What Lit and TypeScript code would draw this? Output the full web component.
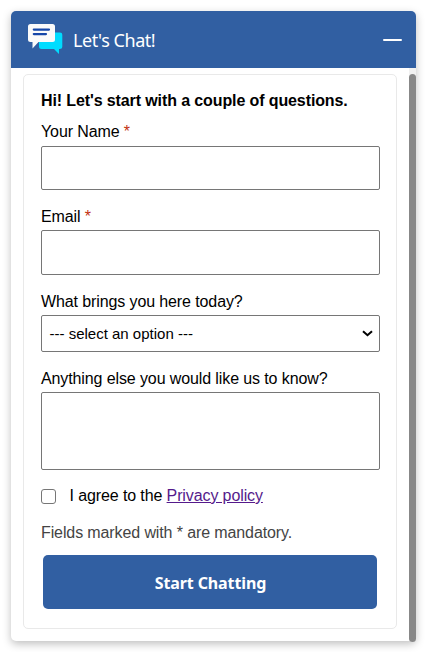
import { LitElement, html, css } from "lit";
import { customElement } from "lit/decorators.js";

@customElement("app-root")
export class AppRoot extends LitElement {
  static styles = css`
    :host {
      display: block;
      height: 652px;
      box-sizing: border-box;
      padding: 11px 10px 0 11px;
      background: #fff;
      overflow: hidden;
      font: 16px/18px "Liberation Sans", Arial, sans-serif;
      letter-spacing: -0.11px;
      color: #000;
    }
    * { box-sizing: border-box; }
    .widget {
      display: flex;
      flex-direction: column;
      width: 405px;
      height: 630px;
      border-radius: 5px;
      background: #fff;
      box-shadow: 0 3px 9px rgba(0, 0, 0, 0.25);
    }
    .header {
      display: flex;
      align-items: center;
      height: 57px;
      flex: none;
      padding: 0 14px 0 17px;
      border-radius: 5px 5px 0 0;
      background: #315fa2;
      color: #fff;
    }
    .logo { display: block; }
    .title {
      flex: 1;
      margin-left: 10px;
      padding-top: 1px;
      font: 18px/24px "Noto Sans", "Open Sans", sans-serif;
      letter-spacing: -0.45px;
      white-space: nowrap;
    }
    .minimize { width: 19px; height: 2px; margin-top: 1px; background: #fff; border-radius: 1px; }
    .body { display: flex; height: 574px; flex: none; }
    .card {
      display: flex;
      flex-direction: column;
      width: 374px;
      height: 555px;
      margin: 6px 12px 0;
      padding: 17px 16px 0 17px;
      border: 1px solid #e9e9e9;
      border-radius: 5px;
    }
    .track { width: 7px; padding-top: 6px; background: #f1f1f1; border-radius: 0 0 4px 4px; }
    .thumb { height: 568px; border-radius: 4px; background: #888; }
    .heading { margin: 0 0 13px; font-size: 16px; line-height: 18px; font-weight: 700; white-space: nowrap; }
    .label { display: block; white-space: nowrap; }
    .req { color: #c23010; }
    .field {
      display: block;
      width: 339px;
      margin: 0;
      border: 1px solid #767676;
      border-radius: 2px;
      background: #fff;
      outline: none;
      resize: none;
    }
    .name { height: 44px; margin: 5px 0 18px; }
    .email { height: 45px; margin: 4px 0 18px; }
    .select {
      display: flex;
      align-items: center;
      justify-content: space-between;
      height: 37px;
      margin: 4px 0 18px;
      padding: 0 6px 0 7.5px;
      font-size: 15px;
      line-height: 17px;
      letter-spacing: 0;
    }
    .notes { height: 78px; margin: 4px 0 17px; }
    .agree { display: flex; align-items: center; height: 18px; white-space: nowrap; }
    .check {
      appearance: none;
      width: 15px;
      height: 15px;
      margin: 0 13.5px 0 0;
      border: 1px solid #767676;
      border-radius: 3px;
      background: #fff;
    }
    .link { color: #551a8b; text-decoration: underline; }
    .hint { margin: 19px 0 13px; color: #444; }
    .button {
      width: 334px;
      height: 54px;
      margin: 0 0 0 2px;
      padding: 2px 0 0 1px;
      border: 0;
      border-radius: 5px;
      background: #315fa2;
      color: #fff;
      font: 700 16px/22px "Noto Sans", "Open Sans", sans-serif;
      letter-spacing: -0.12px;
    }
  `;

  render() {
    return html`
      <section class="widget">
        <header class="header">
          <svg class="logo" width="35" height="32" viewBox="0 0.5 35 32">
            <path d="M14 9H32Q34.3 9 34.3 11.3V23Q34.3 25.5 31.5 25.5H31V30.5L26 25.5H13.5Q11 25.5 11 23V12Z" fill="#00dcff" />
            <path d="M2.5 0.5H24.5Q27 0.5 27 3V16Q27 18.5 24.5 18.5H10.5L4.5 25V18.5H2.5Q0 18.5 0 16V3Q0 0.5 2.5 0.5Z" fill="#fafafa" />
            <path d="M5.8 6.1H21M5.8 10.6H18" stroke="#1546a8" stroke-width="2.2" stroke-linecap="round" />
          </svg>
          <div class="title">Let's Chat!</div>
          <div class="minimize"></div>
        </header>
        <div class="body">
          <form class="card">
            <h1 class="heading">Hi! Let's start with a couple of questions.</h1>
            <label class="label" for="name">Your Name <span class="req">*</span></label>
            <input class="field name" id="name" />
            <label class="label" for="email">Email <span class="req">*</span></label>
            <input class="field email" id="email" />
            <span class="label">What brings you here today?</span>
            <div class="field select" role="combobox">
              <span>--- select an option ---</span>
              <svg width="11" height="7" viewBox="0 0 11 7">
                <path d="M1 1.2L5.5 5.2L10 1.2" fill="none" stroke="#000" stroke-width="2" />
              </svg>
            </div>
            <label class="label" for="notes">Anything else you would like us to know?</label>
            <textarea class="field notes" id="notes"></textarea>
            <div class="agree">
              <input class="check" type="checkbox" id="agree" />
              <label for="agree">I agree to the <a class="link" href="#">Privacy policy</a></label>
            </div>
            <div class="hint">Fields marked with * are mandatory.</div>
            <button class="button" type="button">Start Chatting</button>
          </form>
          <div class="track"><div class="thumb"></div></div>
        </div>
      </section>
    `;
  }
}
